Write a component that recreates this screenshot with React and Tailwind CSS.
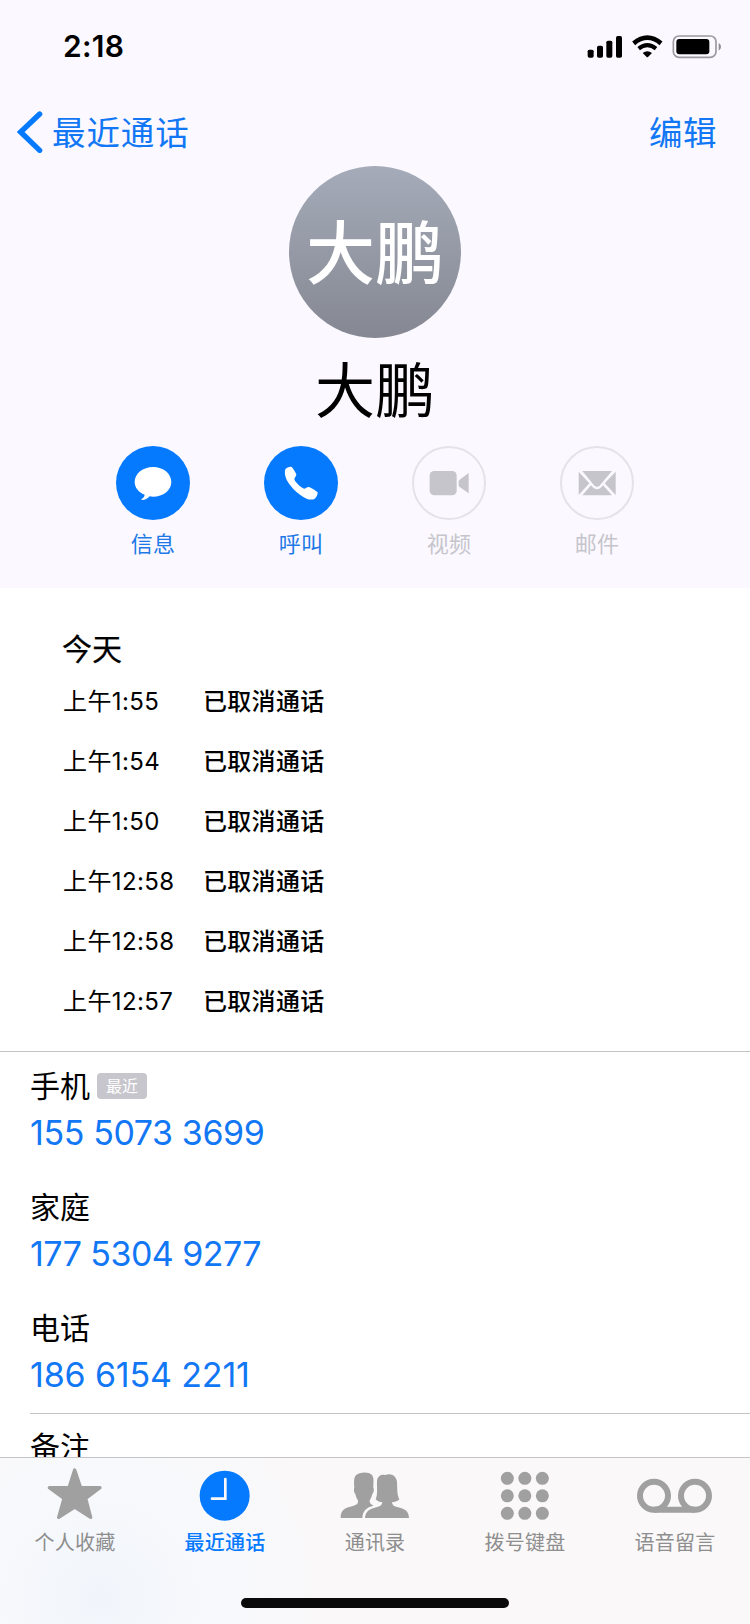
const calls = ['上午1:55', '上午1:54', '上午1:50', '上午12:58', '上午12:58', '上午12:57'];

const phones = [
  { label: '手机', number: '155 5073 3699', recent: true, tracking: 'tracking-[-0.4px]' },
  { label: '家庭', number: '177 5304 9277', tracking: 'tracking-[-0.55px]' },
  { label: '电话', number: '186 6154 2211', tracking: 'tracking-[-0.15px]' },
];

const actions = [
  {
    label: '信息',
    active: true,
    viewBox: '46 48 222 222',
    icon: (
      <path d="M157 111C188 111 212 131 212 156C212 181 188 200 157 200C153 200 150 200 147 199C141 206 133 210 124 210C122 210 122 208 123 207C128 204 131 200 132 194C114 187 102 173 102 156C102 131 127 111 157 111Z" />
    ),
  },
  {
    label: '呼叫',
    active: true,
    viewBox: '490 48 222 222',
    icon: (
      <path d="M554 118C558 113 568 109 573 111C576 113 586 130 587 133C588 138 581 143 581 148C583 156 600 173 610 176C615 176 619 171 624 171C628 171 646 182 650 186C653 190 648 202 642 206C636 210 626 209 618 206C592 196 562 164 555 142C552 133 552 124 554 118Z" />
    ),
  },
  {
    label: '视频',
    viewBox: '64 48 222 222',
    icon: (
      <>
        <rect x="117" y="123" width="81" height="73" rx="14" />
        <path d="M204 154Q204 151 207 149L234 129V190L207 171Q204 169 204 166Z" />
      </>
    ),
  },
  {
    label: '邮件',
    viewBox: '508 48 222 222',
    icon: (
      <>
        <path d="M575 123H664L628 166Q619 175 610 166Z" />
        <path d="M564 125L596 160L564 195Z" />
        <path d="M675 125L642 160L675 195Z" />
        <path d="M575 196L601 166Q610 178 619 178Q628 178 637 166L664 196Z" />
      </>
    ),
  },
];

const tabs = [
  {
    label: '个人收藏',
    viewBox: '0 180 450 210',
    icon: (
      <path
        d="M224 210L242 263H300L257 295L272 352L224 321L176 352L192 295L148 263H207Z"
        fill="currentColor"
        stroke="currentColor"
        strokeWidth="10"
        strokeLinejoin="round"
      />
    ),
  },
  {
    label: '最近通话',
    active: true,
    viewBox: '450 180 450 210',
    icon: (
      <>
        <circle cx="674" cy="287" r="75" fill="currentColor" />
        <path d="M676 237V296H636" fill="none" stroke="#faf9fa" strokeWidth="8" strokeLinecap="round" strokeLinejoin="miter" />
      </>
    ),
  },
  {
    label: '通讯录',
    viewBox: '-60 60 450 210',
    icon: (
      <g fill="currentColor">
        <path d="M62 234C62 211 72 205 96 199C110 195 114 192 114 184C114 178 108 174 106 161C102 160 101 146 103 143C102 128 101 113 108 106C118 96 145 95 155 104C163 112 160 128 160 143C163 146 161 160 157 161C155 174 149 178 149 184C149 190 153 193 160 197C140 202 128 212 127 234Z" />
        <path d="M135 234C137 214 147 208 169 202C181 199 186 195 187 187C180 187 172 184 167 178C174 164 170 139 171 124C172 106 187 102 195 105C215 98 230 109 231 127C232 148 231 164 238 178C231 185 224 186 216 187C217 195 221 199 234 202C257 208 266 214 267 234Z" />
      </g>
    ),
  },
  {
    label: '拨号键盘',
    viewBox: '390 60 450 210',
    icon: (
      <g fill="currentColor">
        {[115, 167.5, 220].map((cy) => [562, 614.5, 667].map((cx) => <circle key={`${cx}-${cy}`} cx={cx} cy={cy} r="19.5" />))}
      </g>
    ),
  },
  {
    label: '语音留言',
    viewBox: '180 60 450 210',
    icon: (
      <g fill="none" stroke="currentColor" strokeWidth="18">
        <circle cx="342" cy="167.5" r="42" />
        <circle cx="465" cy="167.5" r="42" />
        <path d="M342 209.5H465" />
      </g>
    ),
  },
];

function StatusIcons() {
  return (
    <svg className="h-[30px] w-[140px]" viewBox="630 91 420 90">
      <rect x="638" y="147" width="18" height="24" rx="5" />
      <rect x="666" y="135" width="18" height="36" rx="5" />
      <rect x="694" y="120" width="18" height="51" rx="5" />
      <rect x="723" y="106" width="18" height="65" rx="5" />
      <path d="M776 128Q817 94 858 128" fill="none" stroke="#000" strokeWidth="14" />
      <path d="M791 144Q817 123 843 144" fill="none" stroke="#000" strokeWidth="12" />
      <path d="M803 157Q817 146 831 157L819 169Q817 171 815 169Z" />
      <rect x="895" y="106" width="128" height="64" rx="17" fill="none" stroke="#9b999e" strokeWidth="5" />
      <rect x="904" y="115" width="99" height="46" rx="9" />
      <path d="M1031 127Q1038 131 1038 138.500Q1038 146 1031 150Z" fill="#8e8c91" />
    </svg>
  );
}

export default function App() {
  return (
    <div className="flex h-[1624px] w-[750px] flex-col overflow-hidden bg-white font-['Inter','Noto_Sans_CJK_SC',sans-serif] text-black">
      <header className="flex h-[588px] shrink-0 flex-col bg-[#fbf9ff]">
        <div className="flex h-[92px] items-center justify-between pr-[25px] pl-[63px]">
          <span className="text-[30px] leading-none font-semibold tracking-[0.3px]">2:18</span>
          <StatusIcons />
        </div>
        <nav className="flex h-[74px] items-start justify-between pr-[33px] pl-[17px] text-[#1277f5]">
          <button className="flex items-center">
            <svg className="mb-0.5 h-[42px] w-[26px]" viewBox="51 334 78 126">
              <path d="M119 343L62 397L119 452" fill="none" stroke="#067aff" strokeWidth="16" strokeLinecap="round" strokeLinejoin="miter" />
            </svg>
            <span className="ml-[9px] pt-px text-[33.5px] leading-[80px] tracking-[0.9px]">最近通话</span>
          </button>
          <button className="pt-px text-[33.5px] leading-[80px] tracking-[0.5px]">编辑</button>
        </nav>
        <div className="flex flex-col items-center">
          <div className="flex size-[172px] items-center justify-center rounded-full bg-linear-to-b from-[#a5abb9] to-[#858892] pt-[5px] text-[69px] leading-none font-medium text-white">
            大鹏
          </div>
          <h1 className="mt-[9px] h-[87px] text-[60px] leading-[88px]">大鹏</h1>
        </div>
        <div className="mt-3 mr-px flex justify-center gap-[74px]">
          {actions.map((a) => (
            <div key={a.label} className={`flex flex-col items-center ${a.active ? 'text-[#1d79e8]' : 'text-[#c6c5cc]'}`}>
              <div className={`size-[74px] rounded-full ${a.active ? 'bg-[#067aff] text-white' : 'border-2 border-[#e4e3e9]'}`}>
                <svg className={a.active ? 'size-[74px]' : '-m-0.5 size-[74px]'} viewBox={a.viewBox} fill="currentColor">
                  {a.icon}
                </svg>
              </div>
              <span className="mt-2 ml-px text-[22px] leading-8 tracking-[0.3px]">{a.label}</span>
            </div>
          ))}
        </div>
      </header>

      <section className="h-[464px] shrink-0 border-b border-[#c4c4c6] pt-[38px] pl-[62px]">
        <h2 className="text-[30px] leading-[46px] [-webkit-text-stroke:0.25px_black]">今天</h2>
        <ul>
          {calls.map((time, i) => (
            <li key={i} className="flex h-[60px] items-center text-[24px]">
              <span className="w-[141px] pl-px tracking-[0.4px]">{time}</span>
              <span className="font-medium tracking-[0.3px]">已取消通话</span>
            </li>
          ))}
        </ul>
      </section>

      <section className="ml-[30px] h-[362px] shrink-0 border-b border-[#c4c4c6] pt-[11px]">
        {phones.map((p) => (
          <div key={p.number} className="h-[121px]">
            <div className="flex h-[46px] items-center text-[30px]">
              {p.label}
              {p.recent && (
                <span className="ml-[7px] flex h-[26px] w-[50px] items-center justify-center rounded bg-[#c7c6cd] text-[16px] text-white">最近</span>
              )}
            </div>
            <div className={`text-[34px] leading-[48px] text-[#1277f5] ${p.tracking}`}>{p.number}</div>
          </div>
        ))}
      </section>

      <section className="ml-[30px] h-[43px] shrink-0 overflow-hidden pt-[10px] text-[30px] leading-[46px]">备注</section>

      <footer className="flex flex-1 flex-col items-center border-t border-[#c4c4c6] bg-[#faf8f9] bg-[radial-gradient(circle_at_100px_140px,#f1f5fb_0px,#f7f9fc_110px,#faf8f9_230px)]">
        <div className="mt-0.5 grid w-full grid-cols-5">
          {tabs.map((t) => (
            <div key={t.label} className={`flex flex-col items-center ${t.active ? 'text-[#067aff]' : 'text-[#a0a0a0]'}`}>
              <svg className="h-[70px] w-[150px]" viewBox={t.viewBox}>
                {t.icon}
              </svg>
              <span
                className={`mt-px text-[20px] leading-6 tracking-[0.2px] ${t.active ? 'font-medium' : 'text-[#8e8e8e]'}`}
              >
                {t.label}
              </span>
            </div>
          ))}
        </div>
        <div className="mt-[43px] h-[10px] w-[268px] rounded-full bg-[#0a0a0a]" />
      </footer>
    </div>
  );
}
